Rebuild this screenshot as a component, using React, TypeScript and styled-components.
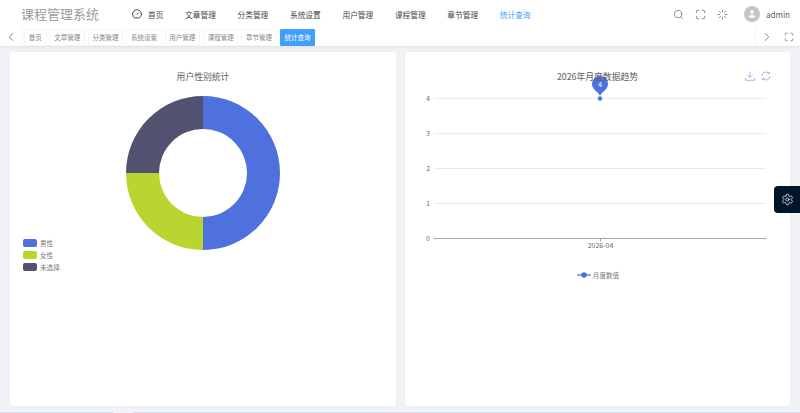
import { createGlobalStyle, styled } from "styled-components";
import { ChevronLeft, ChevronRight, Maximize, Search, Settings, Loader, User } from "lucide-react";

const GlobalStyle = createGlobalStyle`
  html, body {
    margin: 0;
    padding: 0;
    height: 100%;
    overflow: hidden;
    background: #f0f2f5;
    font-family: "Noto Sans CJK SC", "Noto Sans", sans-serif;
  }
`;

const Page = styled.div`
  position: relative;
  width: 800px;
  height: 413px;
  display: flex;
  flex-direction: column;
`;

const Header = styled.header`
  background: #fff;
  box-shadow: 0 1px 3px rgba(0, 21, 41, 0.08);
`;

const TopBar = styled.div`
  height: 28px;
  display: flex;
  align-items: center;
  padding-left: 21px;
`;

const Logo = styled.div`
  width: 111px;
  font-size: 13px;
  line-height: 28px;
  color: #9a9a9a;
  white-space: nowrap;
`;

const Nav = styled.nav`
  display: flex;
  align-items: center;
  flex: 1;
  gap: 21.7px;
  font-size: 7.7px;
`;

const NavItem = styled.span<{ $active?: boolean }>`
  display: inline-flex;
  align-items: center;
  gap: 6px;
  color: ${(p) => (p.$active ? "#409eff" : "#44464b")};
  white-space: nowrap;
`;

const Tools = styled.div`
  display: flex;
  align-items: center;
  color: #5a5e66;
  padding-right: 10px;
`;

const ToolBtn = styled.span`
  display: flex;
  justify-content: center;
  width: 22px;
`;

const Avatar = styled.span`
  width: 16px;
  height: 16px;
  margin: 0 6px 0 11px;
  border-radius: 50%;
  background: #c0c4cc;
  color: #fff;
  display: flex;
  align-items: center;
  justify-content: center;
`;

const UserName = styled.span`
  font-size: 8px;
  color: #606266;
`;

const TabBar = styled.div`
  height: 18px;
  display: flex;
  align-items: center;
  color: #606266;
`;

const TabArrow = styled.span`
  width: 22px;
  display: flex;
  justify-content: center;
  flex-shrink: 0;
`;

const TabList = styled.div`
  flex: 1;
  display: flex;
  gap: 2.9px;
  padding-left: 1px;
  align-self: stretch;
  align-items: center;
  border-left: 1px solid #f2f2f2;
  border-right: 1px solid #f2f2f2;
`;

const Tab = styled.span<{ $active?: boolean }>`
  height: 15px;
  padding: 0 3.75px;
  display: flex;
  align-items: center;
  font-size: 6.5px;
  border-radius: 1px;
  white-space: nowrap;
  border: 1px solid ${(p) => (p.$active ? "#409eff" : "#f4f5f6")};
  background: ${(p) => (p.$active ? "#409eff" : "#fff")};
  color: ${(p) => (p.$active ? "#fff" : "#85888e")};
`;

const Main = styled.main`
  flex: 1;
  display: grid;
  grid-template-columns: 386px 385px;
  gap: 9px;
  padding: 6px 10px 0;
  min-height: 0;
`;

const Card = styled.section`
  position: relative;
  height: 354px;
  background: #fff;
  border-radius: 2px;
  box-shadow: 0 0 1px rgba(0, 0, 0, 0.14);
  display: flex;
  flex-direction: column;
  align-items: center;
  padding-top: 18px;
  box-sizing: border-box;
`;

const ChartTitle = styled.h2`
  position: relative;
  z-index: 1;
  margin: 0;
  height: 14px;
  line-height: 14px;
  font-size: 8.8px;
  font-weight: 400;
  color: #606060;
  white-space: nowrap;
`;

const DonutSvg = styled.svg`
  margin-top: 12px;
  display: block;
`;

const LineSvg = styled.svg`
  display: block;
  overflow: visible;
  flex-shrink: 0;
`;

const PieLegend = styled.ul`
  position: absolute;
  left: 13px;
  top: 187px;
  margin: 0;
  padding: 0;
  list-style: none;
  display: flex;
  flex-direction: column;
  gap: 4px;
`;

const PieLegendItem = styled.li`
  height: 8px;
  display: flex;
  align-items: center;
  gap: 3px;
  font-size: 6.6px;
  color: #777;
`;

const Swatch = styled.span<{ $color: string }>`
  width: 14px;
  height: 8px;
  border-radius: 2px;
  background: ${(p) => p.$color};
`;

const LineLegend = styled.div`
  margin-top: 14px;
  height: 14px;
  display: flex;
  align-items: center;
  gap: 1px;
  font-size: 6.6px;
  color: #777;
`;

const Toolbox = styled.div`
  position: absolute;
  top: 19px;
  right: 19px;
  display: flex;
  gap: 6px;
  color: #8c9bd8;
  z-index: 1;
`;

const SettingsTab = styled.div`
  position: absolute;
  top: 186px;
  right: 0;
  width: 26px;
  height: 27px;
  background: #001528;
  color: #fff;
  border-radius: 4px 0 0 4px;
  display: flex;
  align-items: center;
  justify-content: center;
`;

const ScrollStrip = styled.div`
  position: absolute;
  left: 0;
  right: 0;
  bottom: 0;
  height: 1px;
  display: flex;
  justify-content: space-between;
`;

const StripPiece = styled.span<{ $width: number }>`
  width: ${(p) => p.$width}px;
  background: #d9dfe8;
`;

const navItems = ["文章管理", "分类管理", "系统设置", "用户管理", "课程管理", "章节管理"];
const tabs = ["首页", ...navItems];

const polar = (r: number, deg: number) => {
  const a = ((deg - 90) * Math.PI) / 180;
  return `${77 + r * Math.cos(a)} ${77 + r * Math.sin(a)}`;
};

const slice = (from: number, to: number) => {
  const large = to - from > 180 ? 1 : 0;
  return `M${polar(77, from)} A77 77 0 ${large} 1 ${polar(77, to)} L${polar(44, to)} A44 44 0 ${large} 0 ${polar(44, from)} Z`;
};

const pie = [
  { name: "男性", color: "#4e71dd", from: 0, to: 180 },
  { name: "女性", color: "#b8d62f", from: 180, to: 270 },
  { name: "未选择", color: "#505270", from: 270, to: 360 },
];

// y positions are relative to the svg, which starts at y=84 of the page
const gridLines = [
  { label: "4", y: 14.5 },
  { label: "3", y: 49.5 },
  { label: "2", y: 84.5 },
  { label: "1", y: 119.5 },
];

function LineChart() {
  return (
    <LineSvg width={385} height={170} viewBox="0 0 385 170">
      {gridLines.map((g) => (
        <g key={g.label}>
          <line x1={29} x2={361} y1={g.y} y2={g.y} stroke="#e8eaee" strokeWidth={1} />
          <text x={25} y={g.y + 2.5} textAnchor="end" fontSize={6.6} fill="#666">
            {g.label}
          </text>
        </g>
      ))}
      <line x1={29} x2={361} y1={154.5} y2={154.5} stroke="#a3a6ad" strokeWidth={1} />
      <line x1={195.5} x2={195.5} y1={154.5} y2={157.5} stroke="#a3a6ad" strokeWidth={1} />
      <text x={25} y={157} textAnchor="end" fontSize={6.6} fill="#666">
        0
      </text>
      <text x={195.5} y={163.5} textAnchor="middle" fontSize={7} fill="#666">
        2026-04
      </text>
      <circle cx={195} cy={14.5} r={2.2} fill="#4e71dd" />
      <path
        d="M195 12 C193.5 8 187 5.5 187 0 A8 8 0 1 1 203 0 C203 5.5 196.5 8 195 12 Z"
        fill="#4e71dd"
      />
      <text x={195} y={2.5} textAnchor="middle" fontSize={6.6} fill="#fff">
        4
      </text>
    </LineSvg>
  );
}

export default function App() {
  return (
    <Page>
      <GlobalStyle />
      <Header>
        <TopBar>
          <Logo>课程管理系统</Logo>
          <Nav>
            <NavItem>
              <svg width="10" height="10" viewBox="0 0 10 10" fill="none" stroke="currentColor" strokeWidth="1">
                <path d="M2.7 8.9 A4.4 4.4 0 1 1 7.3 8.9 Z" />
                <path d="M5 5.6 L6.6 3.6" />
              </svg>
              首页
            </NavItem>
            {navItems.map((n) => (
              <NavItem key={n}>{n}</NavItem>
            ))}
            <NavItem $active>统计查询</NavItem>
          </Nav>
          <Tools>
            <ToolBtn>
              <Search size={11} strokeWidth={1.5} />
            </ToolBtn>
            <ToolBtn>
              <Maximize size={11} strokeWidth={1.6} />
            </ToolBtn>
            <ToolBtn>
              <Loader size={11} strokeWidth={1.5} />
            </ToolBtn>
            <Avatar>
              <User size={10} fill="#fff" strokeWidth={1} />
            </Avatar>
            <UserName>admin</UserName>
          </Tools>
        </TopBar>
        <TabBar>
          <TabArrow>
            <ChevronLeft size={14} strokeWidth={1.3} />
          </TabArrow>
          <TabList>
            {tabs.map((t) => (
              <Tab key={t}>{t}</Tab>
            ))}
            <Tab $active>统计查询</Tab>
          </TabList>
          <TabArrow>
            <ChevronRight size={14} strokeWidth={1.3} />
          </TabArrow>
          <TabArrow>
            <Maximize size={10} strokeWidth={1.5} />
          </TabArrow>
        </TabBar>
      </Header>
      <Main>
        <Card>
          <ChartTitle>用户性别统计</ChartTitle>
          <DonutSvg width={154} height={154} viewBox="0 0 154 154">
            {pie.map((s) => (
              <path key={s.name} d={slice(s.from, s.to)} fill={s.color} />
            ))}
          </DonutSvg>
          <PieLegend>
            {pie.map((s) => (
              <PieLegendItem key={s.name}>
                <Swatch $color={s.color} />
                {s.name}
              </PieLegendItem>
            ))}
          </PieLegend>
        </Card>
        <Card>
          <ChartTitle>2026年月度数据趋势</ChartTitle>
          <Toolbox>
            <svg width="10" height="10" viewBox="0 0 10 10" fill="none" stroke="currentColor" strokeWidth="0.7">
              <path d="M5 0.5 V6.5 M2.5 4 L5 6.5 L7.5 4 M0.5 7 V9.3 H9.5 V7" />
            </svg>
            <svg width="10" height="10" viewBox="0 0 10 10" fill="none" stroke="currentColor" strokeWidth="0.8">
              <path d="M1 5 A4 4 0 0 1 8 2.4 M9 5 A4 4 0 0 1 2 7.6" />
              <path d="M8.4 1 V2.6 H6.8 M1.6 9 V7.4 H3.2" />
            </svg>
          </Toolbox>
          <LineChart />
          <LineLegend>
            <svg width="16" height="8" viewBox="0 0 16 8">
              <line x1="1" x2="15" y1="4" y2="4" stroke="#4e71dd" strokeWidth="1.3" />
              <circle cx="8" cy="4" r="2.8" fill="#4e71dd" />
            </svg>
            月度数值
          </LineLegend>
        </Card>
      </Main>
      <SettingsTab>
        <Settings size={13} strokeWidth={1.4} />
      </SettingsTab>
      <ScrollStrip>
        <StripPiece $width={113} />
        <StripPiece $width={667} />
      </ScrollStrip>
    </Page>
  );
}
